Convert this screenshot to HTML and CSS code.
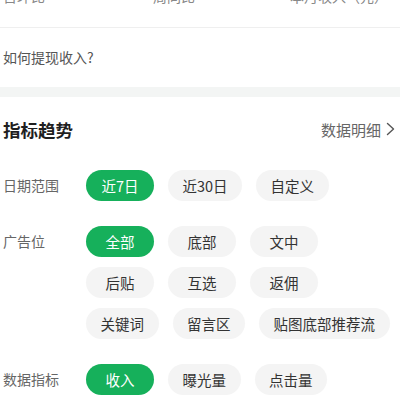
FILE: index.html
```html
<!DOCTYPE html>
<html lang="zh-CN">
<head>
<meta charset="utf-8">
<link rel="stylesheet" href="styles.css">
</head>
<body>
<div class="stats">
  <span class="stat s1">日环比</span>
  <span class="stat s2">周同比</span>
  <span class="stat s3">本月收入（元）</span>
</div>
<div class="withdraw">如何提现收入?</div>
<div class="band"></div>
<div class="trend">
  <div class="trend-head">
    <span class="title">指标趋势</span>
    <span class="detail">数据明细<svg class="chev" width="9" height="14" viewBox="0 0 9 14"><path d="M1.5 1.5 L7.5 7 L1.5 12.5" fill="none" stroke="#555" stroke-width="1.4" stroke-linecap="round" stroke-linejoin="round"/></svg></span>
  </div>
  <div class="filter">
    <div class="label">日期范围</div>
    <div class="opts">
      <span class="pill on">近7日</span>
      <span class="pill">近30日</span>
      <span class="pill">自定义</span>
    </div>
  </div>
  <div class="filter">
    <div class="label">广告位</div>
    <div class="opts">
      <span class="pill on">全部</span>
      <span class="pill">底部</span>
      <span class="pill">文中</span>
      <span class="pill">后贴</span>
      <span class="pill">互选</span>
      <span class="pill">返佣</span>
      <span class="pill">关键词</span>
      <span class="pill">留言区</span>
      <span class="pill">贴图底部推荐流</span>
    </div>
  </div>
  <div class="filter">
    <div class="label">数据指标</div>
    <div class="opts">
      <span class="pill on">收入</span>
      <span class="pill">曝光量</span>
      <span class="pill">点击量</span>
    </div>
  </div>
</div>
</body>
</html>
```
FILE: styles.css
```css
html, body {
  margin: 0;
  padding: 0;
  background: #fff;
  font-family: "Noto Sans CJK SC", "Noto Sans", sans-serif;
  overflow: hidden;
}
.stats {
  display: grid;
  grid-template-columns: 150px 1fr auto;
  margin-top: -11px;
  padding: 0 12px 24px 3px;
  border-bottom: 1px solid #efefef;
  font-size: 14px;
  line-height: 14px;
  color: #888;
}
.withdraw {
  height: 59px;
  line-height: 59px;
  padding-left: 3px;
  font-size: 14px;
  color: #555;
}
.band {
  height: 10px;
  background: #f3f5f4;
}
.trend {
  padding: 20px 5px 0 3px;
}
.trend-head {
  display: flex;
  justify-content: space-between;
  align-items: center;
  height: 24px;
  margin-bottom: 29px;
}
.title {
  font-size: 17.5px;
  font-weight: 700;
  color: #1f1f1f;
}
.detail {
  display: flex;
  align-items: center;
  gap: 5px;
  font-size: 15px;
  color: #666;
}
.filter {
  display: grid;
  grid-template-columns: 83px 1fr;
  margin-bottom: 25px;
}
.label {
  font-size: 14px;
  line-height: 31px;
  color: #666;
}
.opts {
  display: flex;
  flex-wrap: wrap;
  gap: 10px 14px;
}
.pill {
  box-sizing: border-box;
  min-width: 68px;
  height: 31px;
  padding: 0 14.5px;
  border-radius: 16px;
  background: #f4f4f4;
  color: #333;
  font-size: 14.5px;
  line-height: 31px;
  text-align: center;
}
.pill.on {
  background: #16b05b;
  color: #fff;
}
```
